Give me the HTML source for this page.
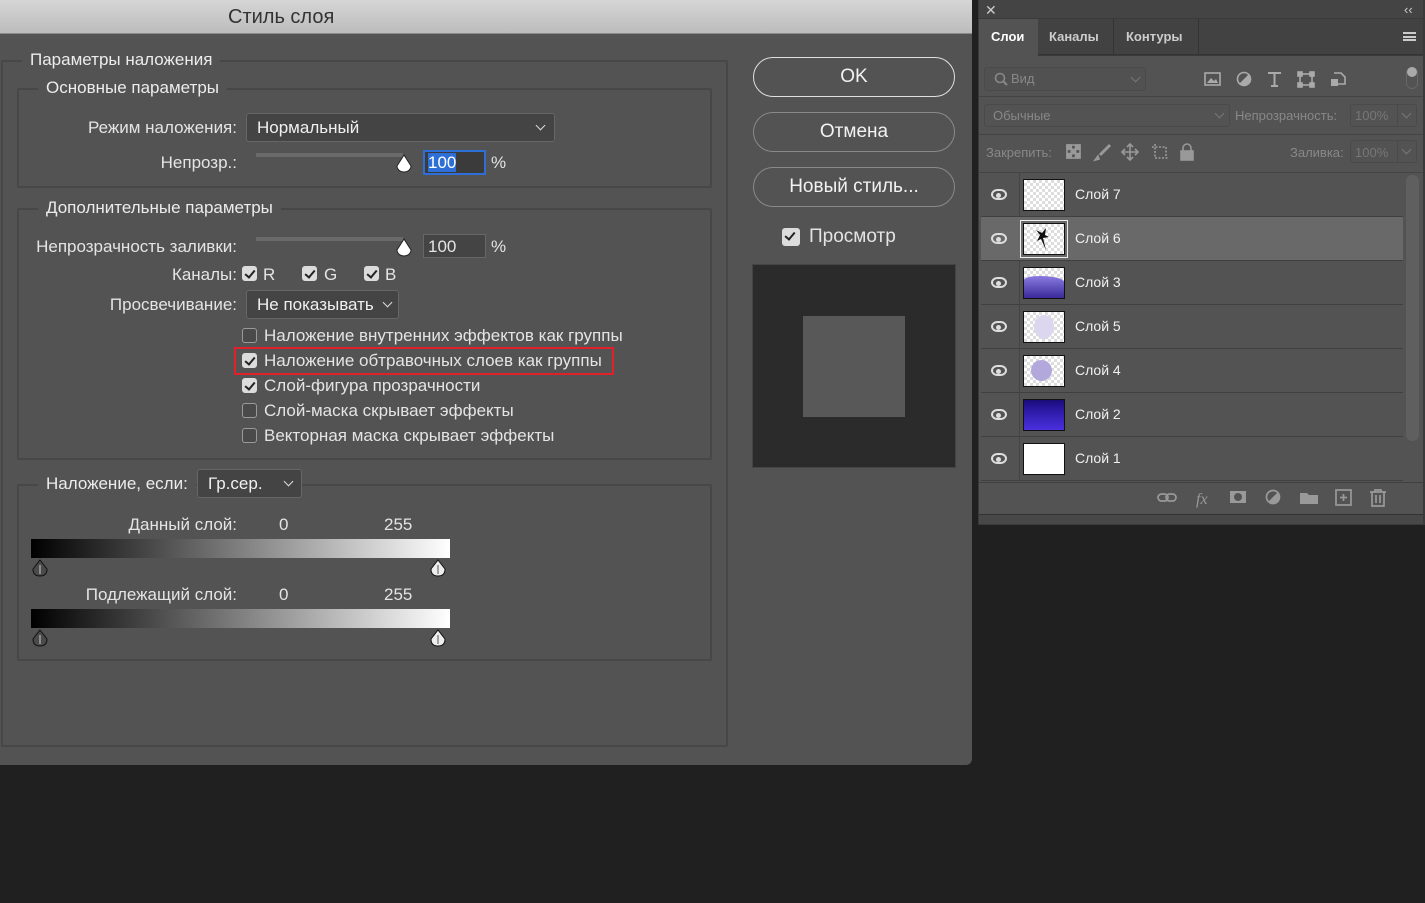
<!DOCTYPE html>
<html><head><meta charset="utf-8"><style>
*{margin:0;padding:0;box-sizing:border-box}
body{width:1425px;height:903px;background:#202020;font-family:"Liberation Sans","DejaVu Sans",sans-serif;position:relative;overflow:hidden;color:#e6e6e6}
.a{position:absolute}
.t{position:absolute;white-space:nowrap;font-size:17px;color:#e4e4e4}
.r{position:absolute;white-space:nowrap;font-size:17px;color:#e4e4e4;right:1188px;text-align:right}
.fs{position:absolute;border:2px solid #474747;border-radius:2px}
.leg{position:absolute;background:#535353;padding:0 8px;font-size:17px;color:#ececec;white-space:nowrap}
.cb{position:absolute;width:15px;height:15px;border-radius:3px;border:1.5px solid #9a9a9a;background:#4a4a4a}
.cb.on{background:#dcdcdc;border-color:#dcdcdc}
.cb.on:after{content:"";position:absolute;left:4px;top:1px;width:4px;height:8px;border:solid #222;border-width:0 2.5px 2.5px 0;transform:rotate(40deg)}
.dd{position:absolute;background:#444;border:1px solid #666;border-radius:3px;font-size:17px;color:#f0f0f0;padding-left:10px}
.chev{position:absolute;width:7px;height:7px;border:solid #ddd;border-width:0 1.5px 1.5px 0;transform:rotate(45deg)}
.btn{position:absolute;left:753px;width:202px;border:1.5px solid #8a8a8a;border-radius:20px;text-align:center;font-size:19px;color:#f2f2f2}
.row{position:absolute;left:981px;width:422px;height:44px;border-bottom:1px solid #404040}
.eye{position:absolute;left:10px;top:16px;width:16px;height:11px;border-radius:50%/60%;border:2px solid #ddd}
.eye:after{content:"";position:absolute;left:3px;top:1.5px;width:5px;height:5px;border-radius:50%;background:#ddd}
.th{position:absolute;left:42px;top:6px;width:42px;height:32px;border:1.5px solid #111;background-color:#fff;background-image:linear-gradient(45deg,#ddd 25%,transparent 25%,transparent 75%,#ddd 75%),linear-gradient(45deg,#ddd 25%,transparent 25%,transparent 75%,#ddd 75%);background-size:6px 6px;background-position:0 0,3px 3px}
.ln{position:absolute;left:94px;top:13px;font-size:14px;color:#f0f0f0}
.pt{position:absolute;font-size:13px;white-space:nowrap}
</style></head><body>
<div class="a" style="left:0;top:0;width:972px;height:765px;background:#535353;border-bottom-right-radius:6px"></div>
<div class="a" style="left:0;top:0;width:972px;height:34px;background:linear-gradient(#d6d6d6,#bcbcbc);border-bottom:1px solid #8a8a8a"></div>
<div class="t" style="left:228px;top:6px;font-size:20px;color:#333">Стиль слоя</div>

<div class="fs" style="left:1px;top:60px;width:727px;height:687px"></div>
<div class="leg" style="left:22px;top:50px">Параметры наложения</div>

<div class="fs" style="left:17px;top:88px;width:695px;height:100px"></div>
<div class="leg" style="left:38px;top:78px">Основные параметры</div>
<div class="r" style="top:118px">Режим наложения:</div>
<div class="dd" style="left:246px;top:113px;width:309px;height:29px;line-height:27px">Нормальный<div class="chev" style="right:10px;top:8px"></div></div>
<div class="r" style="top:153px">Непрозр.:</div>
<div class="a" style="left:256px;top:153px;width:147px;height:4px;background:#6a6a6a"></div>
<svg class="a" style="left:394px;top:154px" width="20" height="20"><path d="M10 1 L17 12 A7 6 0 0 1 3 12 Z" fill="#fff" stroke="#222" stroke-width="1"/></svg>
<div class="a" style="left:423px;top:150px;width:63px;height:25px;border:2px solid #2d6fd6;background:#3b3b3b"></div>
<div class="a" style="left:428px;top:153px;width:28px;height:19px;background:#2d6fd6"></div>
<div class="t" style="left:428px;top:153px;color:#fff">100</div>
<div class="t" style="left:491px;top:153px">%</div>

<div class="fs" style="left:17px;top:208px;width:695px;height:252px"></div>
<div class="leg" style="left:38px;top:198px">Дополнительные параметры</div>
<div class="r" style="top:237px">Непрозрачность заливки:</div>
<div class="a" style="left:256px;top:237px;width:147px;height:4px;background:#6a6a6a"></div>
<svg class="a" style="left:394px;top:238px" width="20" height="20"><path d="M10 1 L17 12 A7 6 0 0 1 3 12 Z" fill="#fff" stroke="#222" stroke-width="1"/></svg>
<div class="a" style="left:423px;top:234px;width:63px;height:24px;border:1px solid #666;background:#444"></div>
<div class="t" style="left:428px;top:237px">100</div>
<div class="t" style="left:491px;top:237px">%</div>
<div class="r" style="top:265px">Каналы:</div>
<div class="cb on" style="left:242px;top:266px"></div><div class="t" style="left:263px;top:265px">R</div>
<div class="cb on" style="left:302px;top:266px"></div><div class="t" style="left:324px;top:265px">G</div>
<div class="cb on" style="left:364px;top:266px"></div><div class="t" style="left:385px;top:265px">B</div>
<div class="r" style="top:295px">Просвечивание:</div>
<div class="dd" style="left:246px;top:290px;width:153px;height:29px;line-height:27px">Не показывать<div class="chev" style="right:7px;top:8px"></div></div>

<div class="cb" style="left:242px;top:328px"></div><div class="t" style="left:264px;top:326px">Наложение внутренних эффектов как группы</div>
<div class="a" style="left:234px;top:347px;width:380px;height:28px;border:2px solid #e0202a"></div>
<div class="cb on" style="left:242px;top:353px"></div><div class="t" style="left:264px;top:351px">Наложение обтравочных слоев как группы</div>
<div class="cb on" style="left:242px;top:378px"></div><div class="t" style="left:264px;top:376px">Слой-фигура прозрачности</div>
<div class="cb" style="left:242px;top:403px"></div><div class="t" style="left:264px;top:401px">Слой-маска скрывает эффекты</div>
<div class="cb" style="left:242px;top:428px"></div><div class="t" style="left:264px;top:426px">Векторная маска скрывает эффекты</div>

<div class="fs" style="left:17px;top:484px;width:695px;height:177px"></div>
<div class="leg" style="left:38px;top:474px">Наложение, если:</div>
<div class="dd" style="left:197px;top:469px;width:105px;height:29px;line-height:27px">Гр.сер.<div class="chev" style="right:9px;top:8px"></div></div>
<div class="r" style="top:515px">Данный слой:</div>
<div class="t" style="left:279px;top:515px">0</div><div class="t" style="left:384px;top:515px">255</div>
<div class="a" style="left:31px;top:539px;width:419px;height:19px;background:linear-gradient(90deg,#000,#fff)"></div>
<svg class="a" style="left:30px;top:558px" width="20" height="20"><path d="M10 2 L17 11 Q17 18 10 18 Q3 18 3 11 Z" fill="#4a4a4a" stroke="#111" stroke-width="1"/><line x1="10" y1="7" x2="10" y2="16" stroke="#ccc"/></svg>
<svg class="a" style="left:428px;top:558px" width="20" height="20"><path d="M10 2 L17 11 Q17 18 10 18 Q3 18 3 11 Z" fill="#eee" stroke="#111" stroke-width="1"/><line x1="10" y1="7" x2="10" y2="16" stroke="#555"/></svg>
<div class="r" style="top:585px">Подлежащий слой:</div>
<div class="t" style="left:279px;top:585px">0</div><div class="t" style="left:384px;top:585px">255</div>
<div class="a" style="left:31px;top:609px;width:419px;height:19px;background:linear-gradient(90deg,#000,#fff)"></div>
<svg class="a" style="left:30px;top:628px" width="20" height="20"><path d="M10 2 L17 11 Q17 18 10 18 Q3 18 3 11 Z" fill="#4a4a4a" stroke="#111" stroke-width="1"/><line x1="10" y1="7" x2="10" y2="16" stroke="#ccc"/></svg>
<svg class="a" style="left:428px;top:628px" width="20" height="20"><path d="M10 2 L17 11 Q17 18 10 18 Q3 18 3 11 Z" fill="#eee" stroke="#111" stroke-width="1"/><line x1="10" y1="7" x2="10" y2="16" stroke="#555"/></svg>

<div class="btn" style="top:57px;height:40px;line-height:37px;border-color:#e0e0e0">OK</div>
<div class="btn" style="top:112px;height:40px;line-height:37px">Отмена</div>
<div class="btn" style="top:167px;height:40px;line-height:37px">Новый стиль...</div>
<div class="cb on" style="left:782px;top:228px;width:18px;height:18px"></div>
<div class="t" style="left:809px;top:226px;font-size:19px">Просмотр</div>
<div class="a" style="left:752px;top:264px;width:204px;height:204px;background:#2b2b2b;border:1px solid #444"></div>
<div class="a" style="left:803px;top:316px;width:102px;height:101px;background:#585858"></div>

<!-- layers panel -->
<div class="a" style="left:978px;top:0;width:447px;height:525px;background:#3a3a3a"></div>
<div class="a" style="left:979px;top:0;width:444px;height:18px;background:#444"></div>
<div class="pt" style="left:985px;top:2px;font-size:14px;color:#ccc">✕</div>
<div class="pt" style="left:1404px;top:2px;color:#ccc">‹‹</div>
<div class="a" style="left:979px;top:19px;width:444px;height:36px;background:#424242;border-bottom:1px solid #333"></div>
<div class="a" style="left:979px;top:19px;width:59px;height:37px;background:#535353"></div>
<div class="pt" style="left:991px;top:29px;font-weight:bold;color:#fff">Слои</div>
<div class="a" style="left:1113px;top:19px;width:1px;height:36px;background:#333"></div>
<div class="a" style="left:1198px;top:19px;width:1px;height:36px;background:#333"></div>
<div class="pt" style="left:1049px;top:29px;font-weight:bold;color:#ccc">Каналы</div>
<div class="pt" style="left:1126px;top:29px;font-weight:bold;color:#ccc">Контуры</div>
<div class="a" style="left:1403px;top:32px;width:13px;height:9px;border-top:2px solid #ccc;border-bottom:2px solid #ccc"></div>
<div class="a" style="left:1403px;top:36px;width:13px;height:2px;background:#ccc"></div>
<div class="a" style="left:979px;top:56px;width:444px;height:460px;background:#535353"></div>
<div class="a" style="left:984px;top:67px;width:162px;height:24px;border:1px solid #4a4a4a;border-radius:3px;background:#515151"></div>
<svg class="a" style="left:994px;top:72px" width="14" height="14"><circle cx="6" cy="6" r="4.5" fill="none" stroke="#888" stroke-width="1.6"/><line x1="9" y1="9" x2="13" y2="13" stroke="#888" stroke-width="2"/></svg>
<div class="pt" style="left:1011px;top:71px;color:#888">Вид</div>
<div class="chev" style="left:1132px;top:74px;border-color:#777"></div>
<svg class="a" style="left:1200px;top:68px" width="150" height="22" fill="none" stroke="#aaa" stroke-width="1.6">
<rect x="5" y="5" width="15" height="12"/><path d="M7 15 L11 10 L14 13 L16 11 L18 15 Z" fill="#aaa" stroke="none"/>
<circle cx="44" cy="11" r="6.5"/><path d="M39 16 L49 6 A6.5 6.5 0 0 1 39 16 Z" fill="#aaa" stroke="none"/>
<path d="M68 5 H81 M74.5 5 V18 M71 18 H78" stroke-width="2"/>
<rect x="100" y="6" width="12" height="11"/><rect x="98" y="4" width="4" height="4" fill="#aaa"/><rect x="110" y="4" width="4" height="4" fill="#aaa"/><rect x="98" y="15" width="4" height="4" fill="#aaa"/><rect x="110" y="15" width="4" height="4" fill="#aaa"/>
<path d="M134 5 H141 L145 9 V16 H138"/><rect x="131" y="11" width="7" height="7" fill="#aaa" stroke="none"/>
</svg>
<div class="a" style="left:1406px;top:67px;width:12px;height:22px;border-radius:6px;border:1px solid #666"></div>
<div class="a" style="left:1407px;top:67px;width:10px;height:10px;border-radius:5px;background:#aaa"></div>
<div class="a" style="left:979px;top:96px;width:444px;height:1px;background:#444"></div>
<div class="a" style="left:984px;top:104px;width:246px;height:23px;border:1px solid #4a4a4a;border-radius:3px"></div>
<div class="chev" style="left:1216px;top:110px;border-color:#777"></div>
<div class="pt" style="left:993px;top:108px;color:#888">Обычные</div>
<div class="pt" style="left:1235px;top:108px;color:#888">Непрозрачность:</div>
<div class="a" style="left:1350px;top:104px;width:67px;height:23px;border:1px solid #4a4a4a;border-radius:3px"></div>
<div class="a" style="left:1397px;top:104px;width:1px;height:23px;background:#4a4a4a"></div>
<div class="chev" style="left:1403px;top:110px;border-color:#777"></div>
<div class="pt" style="left:1355px;top:108px;color:#777">100%</div>
<div class="a" style="left:979px;top:134px;width:444px;height:1px;background:#444"></div>
<div class="pt" style="left:986px;top:145px;color:#888">Закрепить:</div>
<svg class="a" style="left:1064px;top:142px" width="135" height="20" fill="none" stroke="#999" stroke-width="1.6">
<rect x="3" y="3" width="13" height="13"/><rect x="3" y="3" width="4.3" height="4.3" fill="#999"/><rect x="11.6" y="3" width="4.3" height="4.3" fill="#999"/><rect x="7.3" y="7.3" width="4.3" height="4.3" fill="#999"/><rect x="3" y="11.6" width="4.3" height="4.3" fill="#999"/><rect x="11.6" y="11.6" width="4.3" height="4.3" fill="#999"/>
<path d="M46 3 L36 13" stroke-width="3"/><path d="M34 14 L31 18 L35 17 Z" fill="#999"/>
<path d="M66 2 V18 M58 10 H74 M63 5 L66 2 L69 5 M63 15 L66 18 L69 15 M61 7 L58 10 L61 13 M71 7 L74 10 L71 13"/>
<path d="M88 5 H102 V16 M91 2 V16 H105" stroke-dasharray="2 1.5"/>
<rect x="117" y="9" width="12" height="9" fill="#999"/><path d="M119 9 V6 A4 4 0 0 1 127 6 V9"/>
</svg>
<div class="pt" style="left:1290px;top:145px;color:#888">Заливка:</div>
<div class="a" style="left:1350px;top:140px;width:67px;height:23px;border:1px solid #4a4a4a;border-radius:3px"></div>
<div class="a" style="left:1397px;top:140px;width:1px;height:23px;background:#4a4a4a"></div>
<div class="chev" style="left:1403px;top:146px;border-color:#777"></div>
<div class="pt" style="left:1355px;top:145px;color:#777">100%</div>
<div class="a" style="left:979px;top:172px;width:444px;height:1px;background:#444"></div>
<div class="a" style="left:1019px;top:173px;width:1px;height:308px;background:#444"></div>

<div class="row" style="top:173px"><div class="eye"></div><div class="th"></div><div class="ln">Слой 7</div></div>
<div class="row" style="top:217px;background:#696969"><div class="eye"></div><div class="th" style="outline:1.5px solid #eee;outline-offset:2px"><svg width="40" height="30"><path d="M12 6 L18 9 L22 4 L21 11 L25 13 L19 14 L22 26 L17 15 L13 17 L16 11 Z" fill="#111"/></svg></div><div class="ln">Слой 6</div></div>
<div class="row" style="top:261px"><div class="eye"></div><div class="th"><div style="position:absolute;left:0;right:0;bottom:0;height:22px;background:linear-gradient(#8a7ae0,#3a2a9a);border-radius:40% 60% 0 0/4px 6px 0 0"></div></div><div class="ln">Слой 3</div></div>
<div class="row" style="top:305px"><div class="eye"></div><div class="th"><div style="position:absolute;left:10px;top:3px;width:20px;height:24px;border-radius:50%;background:#dcd6ee"></div></div><div class="ln">Слой 5</div></div>
<div class="row" style="top:349px"><div class="eye"></div><div class="th"><div style="position:absolute;left:7px;top:4px;width:21px;height:21px;border-radius:50%;background:#b2a8dc"></div></div><div class="ln">Слой 4</div></div>
<div class="row" style="top:393px"><div class="eye"></div><div class="th" style="background:linear-gradient(#1a0c7a,#2a18a0 30%,#4a30e0)"></div><div class="ln">Слой 2</div></div>
<div class="row" style="top:437px"><div class="eye"></div><div class="th" style="background:#fff"></div><div class="ln">Слой 1</div></div>
<div class="a" style="left:1406px;top:175px;width:13px;height:266px;border-radius:7px;background:#5f5f5f"></div>
<div class="a" style="left:979px;top:482px;width:444px;height:1px;background:#404040"></div>
<svg class="a" style="left:1155px;top:487px" width="240" height="24" fill="none" stroke="#999" stroke-width="1.7">
<rect x="3" y="7" width="10" height="7" rx="3.5"/><rect x="11" y="7" width="10" height="7" rx="3.5"/>
<text x="41" y="17" fill="#999" stroke="none" font-size="16" font-style="italic" font-family="Liberation Serif">fx</text>
<rect x="75" y="4" width="16" height="12" fill="#999" stroke="none"/><circle cx="83" cy="10" r="4" fill="#535353" stroke="none"/>
<circle cx="118" cy="10" r="6.5"/><path d="M113 15 L123 5 A6.5 6.5 0 0 1 113 15 Z" fill="#999" stroke="none"/>
<path d="M145 6 H152 L154 8 H163 V17 H145 Z" fill="#999" stroke="none"/>
<rect x="181" y="3" width="15" height="15"/><path d="M188.5 7 V14 M185 10.5 H192"/>
<path d="M215 5 H231 M220 5 V3 H226 V5 M217 5 V19 H229 V5 M221 8 V16 M225 8 V16"/>
</svg>
<div class="a" style="left:979px;top:514px;width:444px;height:10px;background:#484848;border-top:1px solid #333"></div>
</body></html>
